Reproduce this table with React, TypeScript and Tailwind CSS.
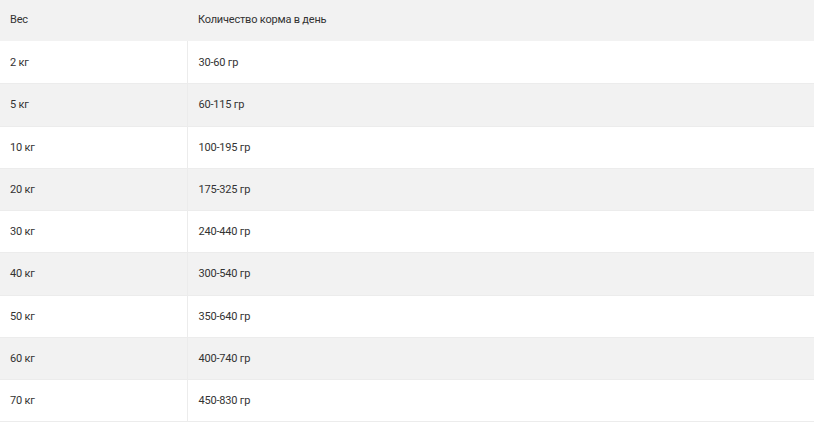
const rows = [
  { w: '2 кг', f: '30-60 гр', h: 'h-[42px]' },
  { w: '5 кг', f: '60-115 гр', h: 'h-[43px]' },
  { w: '10 кг', f: '100-195 гр', h: 'h-[42px]' },
  { w: '20 кг', f: '175-325 гр', h: 'h-[42px]' },
  { w: '30 кг', f: '240-440 гр', h: 'h-[42px]' },
  { w: '40 кг', f: '300-540 гр', h: 'h-[43px]' },
  { w: '50 кг', f: '350-640 гр', h: 'h-[42px]' },
  { w: '60 кг', f: '400-740 гр', h: 'h-[42px]' },
  { w: '70 кг', f: '450-830 гр', h: 'h-[42px]' },
];

export default function App() {
  return (
    <div className="w-[814px] h-[424px] bg-white font-['Roboto',sans-serif] text-[11px] tracking-[-0.2px] text-[#333] overflow-hidden">
      <table className="w-full border-collapse">
        <thead>
          <tr className="h-[41px] bg-[#f2f2f2]">
            <th className="w-[187px] pl-[10px] text-left font-normal">Вес</th>
            <th className="pl-[11px] text-left font-normal">Количество корма в день</th>
          </tr>
        </thead>
        <tbody>
          {rows.map((r, i) => (
            <tr key={i} className={`${r.h} border-b border-[#ececec] ${i % 2 === 0 ? 'bg-white' : 'bg-[#f2f2f2]'}`}>
              <td className="pl-[10px] pt-[2px] border-r border-[#ececec]">{r.w}</td>
              <td className="pl-[11px] pt-[2px]">{r.f}</td>
            </tr>
          ))}
        </tbody>
      </table>
    </div>
  );
}
